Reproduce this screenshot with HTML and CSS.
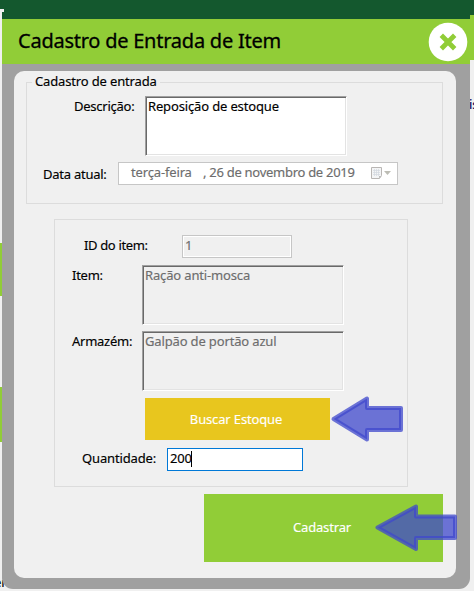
FILE: index.html
```
<!DOCTYPE html>
<html lang="pt-BR">
<head>
<meta charset="utf-8">
<title>Cadastro de Entrada de Item</title>
<link rel="stylesheet" href="styles.css">
</head>
<body>
<div class="backdrop">
  <i class="edge edge-left"></i><i class="edge edge-notch"></i>
  <i class="edge edge-tab one"></i><i class="edge edge-tab two"></i>
  <i class="edge edge-right"></i>
  <span class="peek peek-right">is</span>
  <span class="peek peek-left">er</span>
</div>
<main class="dialog">
  <header class="titlebar">
    <h1>Cadastro de Entrada de Item</h1>
    <button class="close" aria-label="Fechar">
      <svg width="40" height="40" viewBox="0 0 40 40"><circle cx="20" cy="20" r="19.3" fill="#fff"/><path d="M13.300 13.300 26.700 26.700M26.700 13.300 13.300 26.700" stroke="#91cd37" stroke-width="4.800"/></svg>
    </button>
  </header>
  <section class="panel">
    <fieldset class="entry">
      <legend>Cadastro de entrada</legend>
      <div class="row row-desc"><label class="l-desc">Descrição:</label><div class="area white desc">Reposição de estoque</div></div>
      <div class="row row-date"><label class="l-date">Data atual:</label>
        <div class="date"><span class="weekday">terça-feira</span><span class="day">, 26 de novembro de 2019</span>
          <svg class="cal" width="22" height="14" viewBox="0 0 22 14"><path d="M.5 1.500h10v8l-2 3h-8z" fill="#f4f5f6" stroke="#b9b6b4"/><path d="M2 4.500h7M2 6.500h7M2 8.500h7M3.500 3v7M5.500 3v7M7.500 3v7" stroke="#d3d8df" stroke-width=".7"/><path d="M8 12.500V10h2.500z" fill="#bbb"/><path d="M13 5h7l-3.500 4z" fill="#bdbdb5"/></svg>
        </div>
      </div>
    </fieldset>
    <div class="group">
      <div class="row row-id"><label class="l-id">ID do item:</label><div class="id-input">1</div></div>
      <div class="row row-area"><label class="l-item">Item:</label><div class="area">Ração anti-mosca</div></div>
      <div class="row row-area"><label class="l-store">Armazém:</label><div class="area">Galpão de portão azul</div></div>
      <button class="search">Buscar Estoque</button>
      <div class="row row-qty"><label class="l-qty">Quantidade:</label><div class="qty">200<i class="caret"></i></div></div>
    </div>
    <button class="submit">Cadastrar</button>
  </section>
</main>
<svg class="arrows" width="474" height="591" viewBox="0 0 474 591">
  <path d="M333.500 419 367 398.500V408H401V430H367V439.500Z"/>
  <path d="M377.500 527.500 416 506.500V516.500H455V538H416V549Z"/>
</svg>
</body>
</html>
```
FILE: styles.css
```
* { box-sizing: border-box; }
body {
  margin: 0;
  width: 474px;
  height: 591px;
  overflow: hidden;
  position: relative;
  background: #f0f0f0;
  color: #000;
  font: 13px/18px "Noto Sans", "Open Sans", sans-serif;
  letter-spacing: -0.15px;
  -webkit-text-stroke: 0.15px;
  white-space: nowrap;
}
button { border: 0; padding: 0; font: inherit; letter-spacing: inherit; }
.backdrop { position: absolute; inset: 0; background: linear-gradient(#14582e 0 19px, #f0f0f0 19px); }
.edge { position: absolute; }
.edge-left { left: 0; top: 9px; width: 2px; height: 582px; background: #f0f0f0; }
.edge-notch { left: 0; top: 9px; width: 4px; height: 3px; background: #f0f0f0; }
.edge-tab { left: 0; width: 2px; background: #91cd37; }
.one { top: 243px; height: 53px; }
.two { top: 387px; height: 55px; }
.edge-right { left: 470px; top: 15px; width: 4px; height: 45px; background: #91cd37; }
.peek { position: absolute; overflow: hidden; }
.peek-right { left: 469px; top: 95px; width: 5px; color: #00005a; }
.peek-left { left: -6px; top: 573px; }
.dialog {
  position: relative;
  width: 468px;
  height: 570px;
  margin: 19px 0 0 2px;
  background: #a0a0a0;
  border-radius: 0 0 11px 11px;
  overflow: hidden;
}
.titlebar {
  display: flex;
  justify-content: space-between;
  height: 45px;
  padding: 3px 2px 0 16px;
  background: #91cd37;
}
h1 {
  margin: 6px 0 0;
  font-size: 20px;
  line-height: 26px;
  font-weight: 400;
  letter-spacing: -0.24px;
  -webkit-text-stroke: 0.3px;
}
.close { width: 40px; height: 40px; background: none; }
.close svg { display: block; }
.panel {
  width: 442px;
  height: 507px;
  margin: 7px 0 0 12px;
  padding: 1px 13px 0 12px;
  background: #f0f0f0;
  border-radius: 10px;
}
.entry {
  height: 132px;
  margin: 0;
  padding: 0;
  border: 1px solid #dcdcdc;
}
legend { margin-left: 5px; padding: 0 3px; height: 20px; line-height: 19px; }
.row { display: flex; align-items: flex-start; }
label { flex: none; letter-spacing: -0.25px; }
.row-desc { height: 66px; margin-top: 4px; }
.l-desc { width: 71px; margin: 1px 0 0 47px; }
.area {
  width: 202px;
  height: 60px;
  padding: 0 2px;
  border: 1px solid;
  border-color: #a0a0a0 #fff #fff #a0a0a0;
  box-shadow: inset 1px 1px #696969, inset -1px -1px #e3e3e3;
  color: #6d6d6d;
}
.area.white { background: #fff; color: #000; }
.l-date { width: 75px; margin: 3px 0 0 16px; }
.date {
  display: flex;
  width: 280px;
  height: 23px;
  padding: 0 0 0 12px;
  background: #fff;
  border: 1px solid #c6c6c6;
  color: #6d6d6d;
}
.weekday { width: 72px; }
.day { width: 168px; letter-spacing: -0.28px; }
.cal { margin-top: 3px; }
.group {
  width: 354px;
  height: 268px;
  margin: 15px 0 0 28px;
  padding-top: 15px;
  border: 1px solid #dcdcdc;
}
.row-id { height: 30px; }
.l-id { width: 98px; margin: 1px 0 0 29px; letter-spacing: -0.35px; }
.id-input { width: 110px; height: 23px; padding: 0 2px; border: 1px solid #c6c6c6; box-shadow: inset 0 0 0 1px #fff; color: #6d6d6d; }
.row-area { height: 66px; }
.l-item, .l-store { width: 70px; margin: 1px 0 0 17px; }
.search { display: block; width: 185px; height: 42px; margin: 1px 0 0 90px; padding: 0 3px 1px 0; background: #e8c61e; color: #fff; }
.row-qty { margin-top: 8px; }
.l-qty { width: 85px; margin: 1px 0 0 27px; letter-spacing: -0.15px; }
.qty { width: 136px; height: 23px; padding: 0 2px; display: flex; background: #fff; border: 1px solid #0078d7; }
.caret { width: 1px; height: 16px; margin: 2px 0 0 -1px; background: #000; }
.submit { display: block; width: 239px; height: 68px; margin: 7px 0 0 178px; padding: 0 3px 2px 0; background: #91cd37; color: #fff; }
.arrows { position: absolute; left: 0; top: 0; pointer-events: none; }
.arrows path { fill: rgba(63,72,204,.75); stroke: rgba(63,72,204,.75); stroke-width: 4; stroke-linejoin: round; }
```
